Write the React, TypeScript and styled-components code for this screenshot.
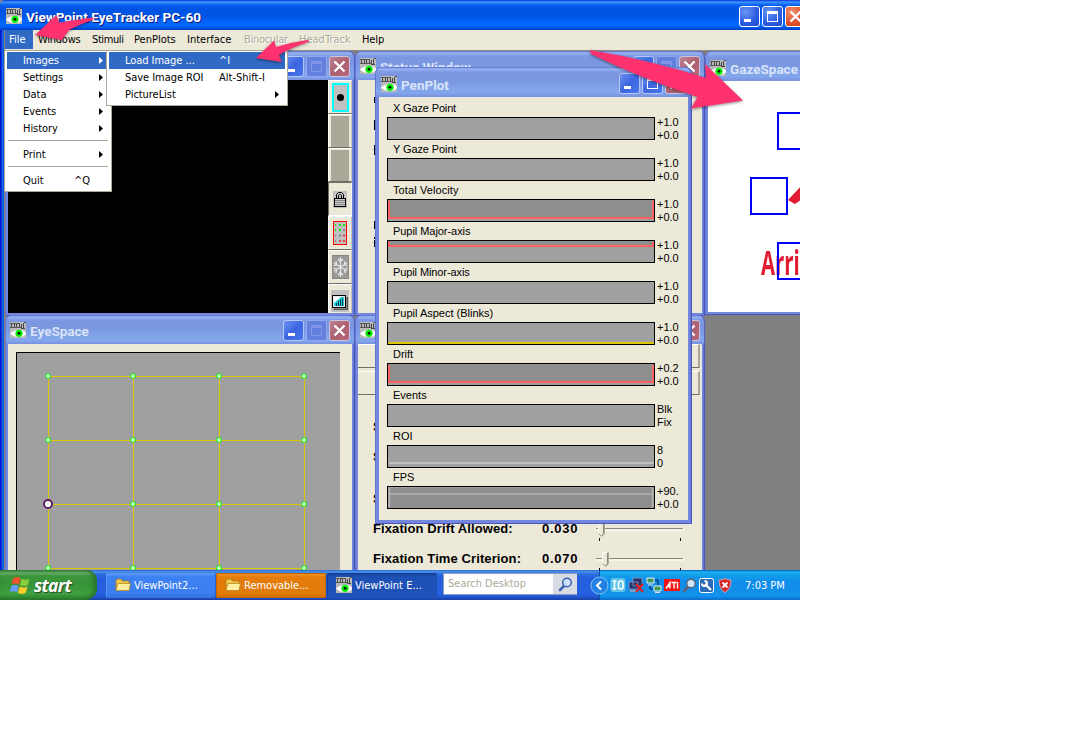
import React from "react";
import styled, { createGlobalStyle, css } from "styled-components";

const UI = `"DejaVu Sans Condensed", "DejaVu Sans", sans-serif`;
const ARIAL = `"Liberation Sans", Arial, sans-serif`;
const CAPTION = `Roboto, "Noto Sans", sans-serif`;

const Global = createGlobalStyle`
  * { box-sizing: border-box; }
  body { margin: 0; background: #fff; }
  svg { display: block; flex: none; }
`;

const Screen = styled.div`
  position: relative;
  width: 800px;
  height: 600px;
  overflow: hidden;
  display: flex;
  flex-direction: column;
  font: 11px/13px ${UI};
  color: #000;
  white-space: nowrap;
  background: #808080;
`;

/* ---------- main window ---------- */
const TitleBar = styled.header`
  height: 30px;
  flex: none;
  display: flex;
  align-items: center;
  padding: 2px 0 0 6px;
  border-top-left-radius: 5px;
  background: linear-gradient(#0831d9 0, #3d95ff 2px, #2a84fb 3px, #0a5fee 5px, #0054e3 9px, #0055e5 16px, #0266fe 22px, #0267ff 26px, #0053e1 28px, #003dc8 30px);
`;

const MainTitle = styled.h1`
  flex: 1;
  margin: 1px 0 0 4px;
  font: bold 13.5px/16px ${CAPTION};
  letter-spacing: 0.03px;
  color: #fff;
  text-shadow: 1px 1px #0a1883;
`;

const CaptionButtons = styled.div<{ $cut?: boolean }>`
  display: flex;
  gap: 2px;
  margin-right: ${(p) => (p.$cut ? -6 : 0)}px;
`;

const CaptionButton = styled.button<{ $kind: "active" | "idle" | "faded" | "close" | "idleClose" }>`
  width: 21px;
  height: 21px;
  flex: none;
  padding: 0;
  border: 1px solid #fff;
  border-radius: 3px;
  ${(p) =>
    ({
      active: css`background: radial-gradient(circle at 30% 25%, #6b94f5, #2a5bdf 60%, #1f4fd0);`,
      idle: css`border-color: #b4c6f5; background: linear-gradient(135deg, #6d8ff0, #3c66e0 50%, #4876ec);`,
      faded: css`border-color: #93a8e8; background: #6280dd;`,
      close: css`background: radial-gradient(circle at 30% 25%, #f09070, #e0502a 60%, #d04010);`,
      idleClose: css`border-color: #cdc3dd; background: linear-gradient(135deg, #bd8294, #ad5f6f 55%, #b56a7a);`,
    })[p.$kind]}
`;

const Min = ({ kind }: { kind: "active" | "idle" }) => (
  <CaptionButton $kind={kind}>
    <svg width="19" height="19"><path d="M4 12h7v3H4z" fill="#fff" /></svg>
  </CaptionButton>
);
const Max = ({ kind }: { kind: "active" | "idle" | "faded" }) => (
  <CaptionButton $kind={kind}>
    <svg width="19" height="19" shapeRendering="crispEdges">
      <path d="M4 4h11v11H4zM5 7v7h9V7z" fillRule="evenodd" fill={kind === "faded" ? "#8298e6" : "#fff"} />
    </svg>
  </CaptionButton>
);
const Close = ({ kind }: { kind: "close" | "idleClose" }) => (
  <CaptionButton $kind={kind}>
    <svg width="19" height="19"><path d="M4.500 4.500l10 10M14.500 4.500l-10 10" stroke="#fff" strokeWidth="2.300" /></svg>
  </CaptionButton>
);

const AppIcon = () => (
  <svg width="16" height="16">
    <rect width="16" height="16" fill="#bababa" />
    <path d="M0 1h10v1H0zM0 5h11v1H0z" fill="#555" />
    <path d="M1 2h1v3H1zM4 2h1v3H4zM6 2h1v3H6zM9 2h1v3H9zM11 2h1v4h-1zM11 6h4v1h-4zM13 1h1v5h-1zM14 0h2v1h-2z" fill="#484848" />
    <path d="M0 11.500Q3.500 8 9 8t7 3v1q-2 3-7 3-5.500 0-9-3.500z" fill="#fff" />
    <circle cx="9" cy="11.300" r="3.600" fill="#00ee00" />
    <circle cx="9" cy="11.300" r="1.400" fill="#000" />
  </svg>
);

const MenuBar = styled.nav`
  height: 20px;
  flex: none;
  display: flex;
  padding-left: 4px;
  background: #ece9d8;
`;

const MenuName = styled.div<{ $w: number; $state?: "open" | "disabled"; $ls?: number }>`
  width: ${(p) => p.$w}px;
  height: 19px;
  padding: 3px 0 0 5px;
  letter-spacing: ${(p) => p.$ls ?? 0}px;
  ${(p) => p.$state === "open" && css`background: #316ac5; color: #fff;`}
  ${(p) => p.$state === "disabled" && css`color: #aca899; text-shadow: 1px 1px #fff;`}
`;

const Workspace = styled.main`
  position: relative;
  flex: 1;
  overflow: hidden;
  background: #808080;
  border-top: 1px solid #8d8b80;
`;

const LeftFrame = styled.div`
  position: absolute;
  left: 0;
  top: 30px;
  width: 5px;
  height: 540px;
  background: linear-gradient(90deg, #0019cf 0 1px, #0831d9 1px 2px, #166aee 2px 3px, #0855dd 3px 4px, #8a867c 4px);
`;

/* ---------- child windows ---------- */
const Frame = styled.section<{ $x: number; $y: number; $w: number; $h: number; $b: number }>`
  position: absolute;
  left: ${(p) => p.$x}px;
  top: ${(p) => p.$y}px;
  width: ${(p) => p.$w}px;
  height: ${(p) => p.$h}px;
  display: flex;
  flex-direction: column;
  padding: 0 ${(p) => p.$b}px ${(p) => p.$b}px;
  border-radius: 7px 7px 0 0;
  overflow: hidden;
  background: #7487de;
  box-shadow: inset 1px 0 #6272d4, inset -1px 0 #4c55b8, inset -2px 0 #6577d6, inset 0 -1px #4c55b8;
`;

const FrameTitle = styled.div<{ $h: number; $b: number }>`
  height: ${(p) => p.$h}px;
  flex: none;
  display: flex;
  align-items: center;
  gap: 4px;
  margin: 0 -${(p) => p.$b}px;
  padding: ${(p) => (p.$h > 29 ? 3 : 1)}px ${(p) => p.$b + 2}px 0 ${(p) => p.$b + 2}px;
  border-radius: 7px 7px 0 0;
  background: linear-gradient(#5b6bcb 0, #9db6f3 2px, #829fe9 4px, #7a96df 7px, #7b98e2 16px, #82a6ea 22px, #82a5ec 26px, #7890e0 100%);
  box-shadow: inset 1px 0 #6272d4, inset -1px 0 #5560c0;
`;

const FrameName = styled.h2`
  flex: 1;
  margin: 2px 0 0;
  font: bold 13.5px/16px ${CAPTION};
  color: #d8e4f8;
`;

const Body = styled.div<{ $bg?: string }>`
  position: relative;
  flex: 1;
  min-height: 0;
  overflow: hidden;
  display: flex;
  background: ${(p) => p.$bg ?? "#ece9d8"};
`;

type WinProps = {
  x: number; y: number; w: number; h: number; title: string; titleH?: number; bg?: string;
  border?: number; max?: "idle" | "faded"; children?: React.ReactNode;
};
const ChildWindow = ({ x, y, w, h, title, titleH = 29, bg, border = 3, max = "faded", children }: WinProps) => (
  <Frame $x={x} $y={y} $w={w} $h={h} $b={border}>
    <FrameTitle $h={titleH} $b={border}>
      <AppIcon />
      <FrameName>{title}</FrameName>
      <CaptionButtons>
        <Min kind="idle" />
        <Max kind={max} />
        <Close kind="idleClose" />
      </CaptionButtons>
    </FrameTitle>
    <Body $bg={bg}>{children}</Body>
  </Frame>
);

/* ---------- camera tool strip ---------- */
const ToolStrip = styled.div`
  width: 24px;
  margin-left: auto;
  display: flex;
  flex-direction: column;
  background: #ece9d8;
`;

const Tool = styled.div<{ $down?: boolean }>`
  height: 34px;
  flex: none;
  display: flex;
  align-items: center;
  justify-content: center;
  border: 1px solid;
  border-color: ${(p) => (p.$down ? "#716f64 #f8f6ee #fff #716f64" : "#fff #cac6b5 #716f64 #fff")};
`;

const Swatch = styled.div`
  width: 18px;
  height: 31px;
  background: #aca899;
`;

const Target = styled.div`
  width: 17px;
  height: 29px;
  display: grid;
  place-items: center;
  border: 2px solid #00ffff;
  background: #c0c0c0;
  &::after {
    content: "";
    width: 7px;
    height: 7px;
    border-radius: 50%;
    background: #000;
  }
`;

const LockIcon = () => (
  <svg width="14" height="17">
    <rect width="14" height="17" fill="#c0c0c0" />
    <path d="M3.500 8V3.500l2-2h3l2 2V8M5.500 8V4.500l1-1h1l1 1V8" fill="none" stroke="#000" />
    <rect x="1.500" y="7.500" width="11" height="8" fill="#c8c8c8" stroke="#000" />
    <path d="M2 9.500h10M2 11.500h10M2 13.500h10" stroke="#888" />
    <path d="M2 15.500h10" stroke="#000" />
  </svg>
);
const DotsIcon = () => (
  <svg width="14" height="24">
    <rect x=".5" y=".5" width="13" height="23" fill="#c0c0c0" stroke="#f00" />
    <path d="M6 4h2M10 4h2M6 9h2" stroke="#0e0" strokeWidth="2" />
    <path d="M2 4h1M2 9h1" stroke="#0e0" strokeWidth="2" />
    <path d="M10 9h2M2 14.500h1M6 14.500h2M2 20h1" stroke="#777" strokeWidth="1.500" />
    <path d="M10 14.500h2M6 20h2M10 20h2" stroke="#e11" strokeWidth="1.500" />
  </svg>
);
const SnowIcon = () => (
  <svg width="17" height="24">
    <rect x=".5" y=".5" width="16" height="23" fill="#999" stroke="#888" />
    <path d="M8.500 2v20M2 8l13 8M15 8L2 16M6 4l2.500 2.500L11 4M6 20l2.500-2.500L11 20M1.500 11l3-1.500L4 6M15.500 11l-3-1.500L13 6M1.500 13l3 1.500L4 18M15.500 13l-3 1.500.5 3.500" fill="none" stroke="#e6e6e6" strokeWidth="1.300" />
  </svg>
);
const MonitorIcon = () => (
  <svg width="18" height="22">
    <rect width="18" height="22" fill="#c0c0c0" />
    <path d="M2 18.500h13.500V7h1.500v13H3z" fill="#555" />
    <rect x="1" y="5" width="14" height="13" fill="#000" />
    <rect x="2.500" y="6.500" width="11" height="10" fill="#1cd0d0" stroke="#e8e8e8" />
    <path d="M3 7h7L3 13z" fill="#fff" />
    <path d="M5.500 16v-3M7.500 16v-5M9.500 16V9.500M11.500 16V8.500" stroke="#06385c" />
  </svg>
);

/* ---------- eye space ---------- */
const EyeCanvas = styled.div`
  flex: none;
  width: 324px;
  height: 240px;
  margin: 8px 0 0 8px;
  border: solid #000;
  border-width: 1px 0 0 1px;
  background: #a0a0a0;
`;

const gx = [31, 116, 202, 287];
const gy = [23, 87, 151, 215];
const CalibrationGrid = () => (
  <svg width="323" height="230">
    {gy.map((y) => <path key={y} d={`M31 ${y + 0.5}H288`} stroke="#dcc800" />)}
    {gx.map((x) => <path key={x} d={`M${x + 0.5} 23V216`} stroke="#dcc800" />)}
    {gy.flatMap((y, r) =>
      gx.map((x, c) =>
        r === 2 && c === 0 ? (
          <circle key="sel" cx={x} cy={y} r="4" fill="#fff" stroke="#5a1560" strokeWidth="1.800" />
        ) : (
          <circle key={`${x}-${y}`} cx={x} cy={y} r="2.200" fill="#fff" stroke="#0f0" strokeWidth="1.100" />
        )
      )
    )}
  </svg>
);

/* ---------- status and controls ---------- */
const EdgeMarks = styled.svg`
  margin-left: 16px;
`;

const Controls = styled.div`
  flex: 1;
  display: flex;
  flex-direction: column;
`;
const TabRow = styled.div`
  height: 24px;
  flex: none;
  margin-right: 2px;
  border: solid;
  border-width: 1px 2px 1px 0;
  border-color: #fff #aca899 #716f64;
  & + & { margin-top: 3px; }
`;
const HiddenRows = styled.div`
  height: 119px;
  flex: none;
  padding: 17px 0 0 15px;
  font: bold 13px/30px ${ARIAL};
`;
const HiddenRow = styled.div<{ $gap?: number }>`
  margin-top: ${(p) => p.$gap ?? 0}px;
`;
const ControlRow = styled.div`
  height: 30px;
  flex: none;
  display: flex;
  align-items: center;
  padding-left: 15px;
  font: bold 13px/16px ${ARIAL};
`;
const ControlName = styled.span`
  width: 169px;
  letter-spacing: 0.1px;
`;
const ControlValue = styled.span`
  width: 53px;
  letter-spacing: 0.75px;
`;
const Slider = ({ at }: { at: number }) => (
  <svg width="90" height="24">
    <path d="M1 11.500h87" stroke="#8a877a" />
    <path d="M1 13h88M88.500 11v2" stroke="#fff" />
    <path d={`M${at + 0.5} 5.500h6v11l-3 3-3-3z`} fill="#ece9d8" stroke="#aca899" />
    <path d={`M${at + 5.5} 6v10.500l-2 2.500`} stroke="#8a877a" fill="none" />
    <path d={`M${at + 0.5} 16V5.500h5`} stroke="#fff" fill="none" />
    <path d="M4.500 21v3M85.500 21v3" stroke="#000" />
  </svg>
);

/* ---------- pen plot ---------- */
const PlotList = styled.div`
  flex: 1;
  display: flex;
  flex-direction: column;
  padding: 4px 0 0 8px;
  font: 11px/13px ${ARIAL};
`;
const PlotRow = styled.div`
  height: 41px;
  flex: none;
`;
const PlotName = styled.div<{ $ls?: number }>`
  height: 16px;
  padding: 1px 0 0 6px;
  letter-spacing: ${(p) => p.$ls ?? 0}px;
`;
const PlotLine = styled.div`
  display: flex;
  gap: 2px;
`;
const Plot = styled.div`
  width: 268px;
  height: 23px;
  border: 1px solid #000;
  background: #a0a0a0;
`;
const Scale = styled.div`
  display: flex;
  flex-direction: column;
  margin-top: -1px;
`;

type PlotData = { name: string; hi?: string; lo?: string; trace?: React.ReactNode; ls?: number };
const lowTrace = (
  <>
    <rect x="1" width="264" height="17" fill="#8e8e8e" />
    <path d="M1 1v17h264V1" fill="none" stroke="#ff6060" strokeWidth="2" />
  </>
);
const plots: PlotData[] = [
  { name: "X Gaze Point", ls: -0.15 },
  { name: "Y Gaze Point", ls: -0.1 },
  { name: "Total Velocity", ls: 0.1 },
  { name: "Pupil Major-axis", ls: -0.05 },
  { name: "Pupil Minor-axis", ls: -0.1 },
  { name: "Pupil Aspect (Blinks)", ls: 0, trace: <path d="M0 20h266" stroke="#dcc800" strokeWidth="2" /> },
  { name: "Drift", hi: "+0.2", trace: lowTrace },
  { name: "Events", hi: "Blk", lo: "Fix" },
  { name: "ROI", hi: "8", lo: "0", trace: <path d="M1 17h265" stroke="#c0c0c0" strokeWidth="2" /> },
  {
    name: "FPS",
    hi: "+90.",
    trace: (
      <>
        <rect x="2" y="1" width="262" height="20" fill="#8e8e8e" />
        <path d="M2 7h262M1.500 1v20M264.500 1v20" stroke="#b0b0b0" strokeWidth="1.500" />
      </>
    ),
  },
];
plots[2].trace = lowTrace;
plots[3].trace = (
  <>
    <rect x="1" width="264" height="5" fill="#8e8e8e" />
    <path d="M1 1v4h264V1" fill="none" stroke="#ff6060" strokeWidth="2" />
  </>
);

/* ---------- gaze space ---------- */
const GazeCanvas = styled.div`
  position: relative;
  flex: 1;
`;
const Roi = styled.div<{ $x: number; $y: number }>`
  position: absolute;
  left: ${(p) => p.$x}px;
  top: ${(p) => p.$y}px;
  width: 38px;
  height: 38px;
  border: 2px solid #0000ff;
`;
const Arrival = styled.div`
  position: absolute;
  left: 53px;
  top: 159px;
  font: bold 34px/44px "Open Sans", sans-serif;
  color: #e01b32;
  transform: scaleX(0.6);
  transform-origin: 0 0;
`;
const RedMark = styled.svg`
  position: absolute;
  left: 80px;
  top: 100px;
`;

/* ---------- popup menus ---------- */
const Popup = styled.div<{ $x: number; $w: number; $h: number }>`
  position: absolute;
  left: ${(p) => p.$x}px;
  top: 50px;
  width: ${(p) => p.$w}px;
  height: ${(p) => p.$h}px;
  padding: 1px 2px;
  border: 1px solid #aca899;
  background: #fff;
`;
const Item = styled.div<{ $on?: boolean; $key?: number }>`
  display: flex;
  align-items: center;
  height: 17px;
  padding-left: 16px;
  ${(p) => p.$on && css`background: #316ac5; color: #fff;`}
  & > svg { margin: 0 6px 0 auto; }
  & > span:first-child { flex: none; width: ${(p) => p.$key ?? 51}px; letter-spacing: -0.05px; }
`;
const Rule = styled.div`
  height: 9px;
  padding: 3px 1px 0;
  &::after { content: ""; display: block; height: 1px; background: #aca899; }
`;
const Caret = () => (
  <svg width="4" height="7"><path d="M0 0l4 3.500L0 7z" fill="currentColor" /></svg>
);

/* ---------- taskbar ---------- */
const TaskBar = styled.footer`
  position: relative;
  height: 30px;
  flex: none;
  display: flex;
  align-items: center;
  color: #fff;
  background: linear-gradient(#3168d5 0, #4993e6 2px, #2b6de0 4px, #245edb 8px, #2661e0 22px, #245bdb 26px, #1941a5 30px);
`;
const StartButton = styled.button`
  width: 97px;
  height: 30px;
  display: flex;
  align-items: center;
  gap: 4px;
  padding: 0 0 0 10px;
  border: 0;
  border-radius: 0 10px 12px 0;
  background: linear-gradient(#388638 0, #6cb26c 3px, #3c953c 6px, #379337 14px, #3fa03f 24px, #2c7a2c 30px);
  box-shadow: inset -3px 0 5px #24702a;
  font: italic bold 17.5px/20px "Open Sans", sans-serif;
  letter-spacing: -0.7px;
  color: #fff;
  text-shadow: 1px 1px 1px #234b23;
`;
const TaskButton = styled.button<{ $tone: "blue" | "orange" | "dark"; $w: number; $ml: number; $ls?: number }>`
  width: ${(p) => p.$w}px;
  height: 25px;
  flex: none;
  display: flex;
  align-items: center;
  gap: 3px;
  margin-left: ${(p) => p.$ml}px;
  padding: 0 0 0 9px;
  border: 0;
  border-radius: 2px;
  font: 11px/13px ${UI};
  letter-spacing: ${(p) => p.$ls ?? 0}px;
  color: #fff;
  ${(p) =>
    ({
      blue: css`background: linear-gradient(#5f9cf8, #3c81f3 4px, #3c7ef0 20px, #3472dc); box-shadow: inset 1px 1px #5a96f5;`,
      orange: css`background: linear-gradient(#f49a30, #e57d0d 4px, #e07a08 20px, #d06c00); box-shadow: inset 0 0 0 1px #c46200;`,
      dark: css`background: linear-gradient(#15429a, #1e50b4 4px, #1f53ba); box-shadow: inset 1px 1px #123c90;`,
    })[p.$tone]}
`;
const Search = styled.div`
  width: 134px;
  height: 22px;
  flex: none;
  display: flex;
  margin: -2px 0 0 6px;
  background: #fff;
  color: #aca899;
  border: 1px solid #8a9cc0;
  border-right: 0;
`;
const SearchText = styled.div`
  width: 109px;
  padding: 3px 0 0 4px;
  font-size: 11px;
`;
const SearchButton = styled.div`
  flex: 1;
  display: grid;
  place-items: center;
  background: #d8dbe4;
`;
const Tray = styled.div`
  width: 201px;
  height: 30px;
  flex: none;
  margin-left: auto;
  display: flex;
  align-items: center;
  gap: 2px;
  padding-left: 11px;
  background: linear-gradient(#0c59b9 0, #18b5f4 2px, #139ee9 5px, #0f8dec 12px, #1290e8 22px, #1193ee 26px, #0c6cc8 30px);
  box-shadow: inset 1px 0 #0a4ea0;
`;
const Clock = styled.span`
  margin-left: 9px;
`;
const TrayToggle = styled.div`
  position: absolute;
  left: 590px;
  top: 6px;
`;

const FlagIcon = () => (
  <svg width="20" height="19" viewBox="0 0 19 18">
    <path d="M3 2q4-2 7 0L8.500 8Q5 6 1.500 8z" fill="#f0542c" />
    <path d="M11 2.500q4 2 7.500 0L17 8.500q-4 2-7.500 0z" fill="#8ccf3c" />
    <path d="M1.200 9.500q3.500-2 7 0L6.700 15.500q-3.500-2-7 0z" fill="#6a9cf8" />
    <path d="M9.200 10q4 2 7.500 0L15 16q-4 2-7.500 0z" fill="#fccc2c" />
  </svg>
);
const FolderIcon = () => (
  <svg width="16" height="14">
    <path d="M1 12V2.500L2.500 1H6l1.500 2H14v9z" fill="#f0c850" stroke="#a87818" strokeWidth=".8" />
    <path d="M1 12.500L3 5.500h12.500L14 12.500z" fill="#fff0a0" stroke="#b88820" strokeWidth=".8" />
  </svg>
);
const Lens = ({ rim, fill }: { rim: string; fill: string }) => (
  <svg width="15" height="15">
    <path d="M6 9L2 13" stroke={rim} strokeWidth="2.500" strokeLinecap="round" />
    <circle cx="9" cy="5.500" r="4.300" fill={fill} stroke={rim} strokeWidth="1.500" />
  </svg>
);

const Annotations = styled.svg`
  position: absolute;
  left: 0;
  top: 0;
  pointer-events: none;
  filter: drop-shadow(0 1.5px 1.5px rgba(0, 0, 0, 0.45));
`;

export default function App() {
  return (
    <>
      <Global />
      <Screen>
        <TitleBar>
          <AppIcon />
          <MainTitle>ViewPoint EyeTracker PC-60</MainTitle>
          <CaptionButtons $cut>
            <Min kind="active" />
            <Max kind="active" />
            <Close kind="close" />
          </CaptionButtons>
        </TitleBar>
        <MenuBar>
          <MenuName $w={29} $state="open">File</MenuName>
          <MenuName $w={54} $ls={-0.25}>Windows</MenuName>
          <MenuName $w={42} $ls={-0.4}>Stimuli</MenuName>
          <MenuName $w={53}>PenPlots</MenuName>
          <MenuName $w={57}>Interface</MenuName>
          <MenuName $w={55} $state="disabled" $ls={-0.3}>Binocular</MenuName>
          <MenuName $w={63} $state="disabled">HeadTrack</MenuName>
          <MenuName $w={40} $ls={-0.1}>Help</MenuName>
        </MenuBar>

        <Workspace>
          <ChildWindow x={5} y={0} w={350} h={265} title="">
            <Body $bg="#000" />
            <ToolStrip>
              <Tool><Target /></Tool>
              <Tool><Swatch /></Tool>
              <Tool><Swatch /></Tool>
              <Tool $down><LockIcon /></Tool>
              <Tool><DotsIcon /></Tool>
              <Tool><SnowIcon /></Tool>
              <Tool><MonitorIcon /></Tool>
            </ToolStrip>
          </ChildWindow>

          <ChildWindow x={355} y={0} w={350} h={265} title="Status Window">
            <EdgeMarks width="2" height="200" shapeRendering="crispEdges">
              <path d="M0 17h1v6h-1zM0 40h1v10h-1zM0 65h1v10h-1zM0 141h1v8h-1zM0 157h1v2h-1zM0 160h1v7h-1z" />
            </EdgeMarks>
          </ChildWindow>

          <ChildWindow x={705} y={0} w={350} h={264} title="GazeSpace" titleH={30} bg="#fff">
            <GazeCanvas>
              <Roi $x={69} $y={31} />
              <Roi $x={42} $y={96} />
              <RedMark width="14" height="30"><path d="M0 19L14 4v14L7 23z" fill="#e01b32" /></RedMark>
              <Arrival>Arri</Arrival>
              <Roi $x={69} $y={161} />
            </GazeCanvas>
          </ChildWindow>

          <ChildWindow x={5} y={264} w={350} h={300} title="EyeSpace">
            <EyeCanvas><CalibrationGrid /></EyeCanvas>
          </ChildWindow>

          <ChildWindow x={355} y={264} w={350} h={300} title="">
            <Controls>
              <TabRow />
              <TabRow />
              <HiddenRows>
                <HiddenRow>S</HiddenRow>
                <HiddenRow>S</HiddenRow>
                <HiddenRow $gap={12}>S</HiddenRow>
              </HiddenRows>
              <ControlRow>
                <ControlName>Fixation Drift Allowed:</ControlName>
                <ControlValue>0.030</ControlValue>
                <Slider at={3} />
              </ControlRow>
              <ControlRow>
                <ControlName>Fixation Time Criterion:</ControlName>
                <ControlValue>0.070</ControlValue>
                <Slider at={7} />
              </ControlRow>
            </Controls>
          </ChildWindow>

          <ChildWindow x={375} y={16} w={317} h={457} title="PenPlot" titleH={30} max="idle" border={4}>
            <PlotList>
              {plots.map((p) => (
                <PlotRow key={p.name}>
                  <PlotName $ls={p.ls}>{p.name}</PlotName>
                  <PlotLine>
                    <Plot>
                      <svg width="266" height="21">{p.trace}</svg>
                    </Plot>
                    <Scale>
                      <span>{p.hi ?? "+1.0"}</span>
                      <span>{p.lo ?? "+0.0"}</span>
                    </Scale>
                  </PlotLine>
                </PlotRow>
              ))}
            </PlotList>
          </ChildWindow>
        </Workspace>

        <TaskBar>
          <StartButton><FlagIcon />start</StartButton>
          <TaskButton $tone="blue" $w={109} $ml={9}><FolderIcon />ViewPoint2...</TaskButton>
          <TaskButton $tone="orange" $w={110} $ml={1}><FolderIcon />Removable...</TaskButton>
          <TaskButton $tone="dark" $w={110} $ml={1}><AppIcon />ViewPoint E...</TaskButton>
          <Search>
            <SearchText>Search Desktop</SearchText>
            <SearchButton><Lens rim="#3a62b4" fill="#cfe2fb" /></SearchButton>
          </Search>
          <Tray>
            <svg width="16" height="16">
              <rect x=".5" y="1" width="15" height="14" rx="3" fill="#5ec4ea" />
              <path d="M2.500 4h4M4.500 4v8M2.500 12h4" stroke="#fff" strokeWidth="1.600" />
              <rect x="8.500" y="4" width="4.500" height="8" rx="2" fill="none" stroke="#fff" strokeWidth="1.600" />
            </svg>
            <svg width="16" height="16">
              <path d="M5 1h9v8H5zM1 5h9v7H1z" fill="#26346e" stroke="#8d9bc8" strokeWidth=".8" />
              <path d="M2 14h8" stroke="#aab" strokeWidth="1.500" />
              <path d="M8 7l7 8M15 7l-7 8" stroke="#e02020" strokeWidth="2" />
            </svg>
            <svg width="16" height="16">
              <path d="M1 1h7v5H1zM8 9h7v5H8z" fill="#3c9a58" stroke="#e4ecf8" />
              <path d="M2 8h5M9 15.500h5" stroke="#dde" />
              <path d="M9 3h3v5M4 9v3h3" fill="none" stroke="#0a1c50" />
            </svg>
            <svg width="16" height="12">
              <rect width="16" height="12" fill="#f01414" />
              <path d="M2 9.500l4-6v6M4 7.500h2M7.500 3.500h5M10 3.500v6M13.500 3v6.500" stroke="#fff" strokeWidth="1.400" fill="none" />
            </svg>
            <Lens rim="#5a6478" fill="#cfe6fb" />
            <svg width="15" height="15">
              <rect x=".5" y=".5" width="14" height="14" rx="2" fill="#2c6cb4" stroke="#fff" />
              <path d="M6 6l6 6" stroke="#fff" strokeWidth="2.200" />
              <path d="M3 5.500a2.500 2.500 0 1 0 2.500-2.500" stroke="#fff" strokeWidth="2" fill="none" />
            </svg>
            <svg width="18" height="15" viewBox="-2 0 18 15">
              <path d="M7 .5q3 2 6 1.500 0 9-6 12.500Q1 11 1 2q3 .5 6-1.500z" fill="#d42424" stroke="#f4b4b4" strokeWidth=".8" />
              <path d="M4.500 4.500l5 5M9.500 4.500l-5 5" stroke="#fff" strokeWidth="1.800" />
            </svg>
            <Clock>7:03 PM</Clock>
          </Tray>
          <TrayToggle>
            <svg width="19" height="19">
              <circle cx="9.500" cy="9.500" r="8.500" fill="#2580e4" stroke="#7ccaf6" />
              <path d="M11 5.500l-4 4 4 4" fill="none" stroke="#fff" strokeWidth="2" />
            </svg>
          </TrayToggle>
        </TaskBar>

        <LeftFrame />
        <Popup $x={4} $w={108} $h={142}>
          <Item $on><span>Images</span><Caret /></Item>
          <Item><span>Settings</span><Caret /></Item>
          <Item><span>Data</span><Caret /></Item>
          <Item><span>Events</span><Caret /></Item>
          <Item><span>History</span><Caret /></Item>
          <Rule />
          <Item><span>Print</span><Caret /></Item>
          <Rule />
          <Item><span>Quit</span><span>^Q</span></Item>
        </Popup>
        <Popup $x={106} $w={182} $h={56}>
          <Item $on $key={94}><span>Load Image ...</span><span>^I</span></Item>
          <Item $key={94}><span>Save Image ROI</span><span>Alt-Shift-I</span></Item>
          <Item $key={94}><span>PictureList</span><Caret /></Item>
        </Popup>

        <Annotations width="800" height="130" fill="#ff316f">
          <path d="M35 35L56.500 15 59 22.500Q75 20 93 17.500V20Q78 25 69 30L62 40Z" />
          <path d="M256 58L274 40.500 276 47Q292 42 308 40 310 41 308 42 290 48 279 55L281.500 62Z" />
          <path d="M590 50Q650 60 706 78L705 64 743 100.500 691 108.500 697.500 97Q640 78 591 54Z" />
        </Annotations>
      </Screen>
    </>
  );
}
